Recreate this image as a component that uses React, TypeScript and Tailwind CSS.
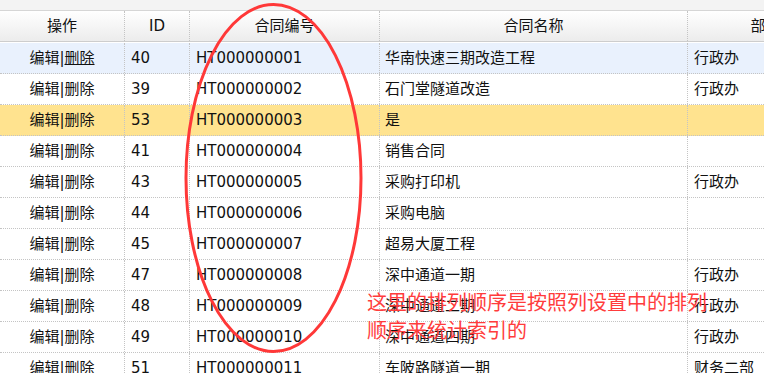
import React from "react";

type Row = {
  id: number;
  code: string;
  name: string;
  dept: string;
  tone?: "hover" | "selected";
};

const rows: Row[] = [
  { id: 40, code: "HT000000001", name: "华南快速三期改造工程", dept: "行政办", tone: "hover" },
  { id: 39, code: "HT000000002", name: "石门堂隧道改造", dept: "行政办" },
  { id: 53, code: "HT000000003", name: "是", dept: "", tone: "selected" },
  { id: 41, code: "HT000000004", name: "销售合同", dept: "" },
  { id: 43, code: "HT000000005", name: "采购打印机", dept: "行政办" },
  { id: 44, code: "HT000000006", name: "采购电脑", dept: "" },
  { id: 45, code: "HT000000007", name: "超易大厦工程", dept: "" },
  { id: 47, code: "HT000000008", name: "深中通道一期", dept: "行政办" },
  { id: 48, code: "HT000000009", name: "深中通道二期", dept: "行政办" },
  { id: 49, code: "HT000000010", name: "深中通道四期", dept: "行政办" },
  { id: 51, code: "HT000000011", name: "车陂路隧道一期", dept: "财务二部" },
];

const cell = "h-full flex items-center border-r border-dotted border-[#c4c4c4] shrink-0 overflow-hidden whitespace-nowrap";

export default function App() {
  return (
    <div
      className="relative w-[764px] h-[373px] overflow-hidden bg-white text-[15px] text-[#111]"
      style={{ fontFamily: '"DejaVu Sans", "Noto Sans CJK SC", sans-serif' }}
    >
      {/* 顶部空白条 */}
      <div className="h-[11px] bg-[#f3f3f3] border-b border-[#d6d6d6]" />

      {/* 表头 */}
      <div className="flex h-[31px] bg-gradient-to-b from-white to-[#ececec] border-b border-[#cdcdcd]">
        <div className={`${cell} w-[125px] justify-center`}>操作</div>
        <div className={`${cell} w-[65px] justify-center`}>ID</div>
        <div className={`${cell} w-[190px] justify-center`}>合同编号</div>
        <div className={`${cell} w-[308px] justify-center`}>合同名称</div>
        <div className={`${cell} w-[156px] justify-center`}>部门</div>
      </div>
      <div className="h-px bg-white" />

      {/* 数据行 */}
      {rows.map((r) => (
        <div
          key={r.id}
          className={`flex h-[31px] border-b border-dotted border-[#c4c4c4] ${
            r.tone === "hover" ? "bg-[#e9f1fd]" : r.tone === "selected" ? "bg-[#ffe38f]" : "bg-white"
          }`}
        >
          <div className={`${cell} w-[125px] justify-center`}>
            编辑|<span className={r.tone === "hover" ? "underline" : ""}>删除</span>
          </div>
          <div className={`${cell} w-[65px] pl-[6px]`}>{r.id}</div>
          <div className={`${cell} w-[190px] pl-[6px]`}>{r.code}</div>
          <div className={`${cell} w-[308px] pl-[5px]`}>{r.name}</div>
          <div className={`${cell} w-[156px] pl-[6px]`}>{r.dept}</div>
        </div>
      ))}

      {/* 标注 */}
      <svg className="absolute left-0 top-0 pointer-events-none" width="764" height="373">
        <ellipse cx="273.5" cy="178" rx="87.5" ry="173.5" fill="none" stroke="#ff3838" strokeWidth="3" />
      </svg>
      <div
        className="absolute left-[367px] top-[288px] text-[20px] leading-[28px] text-[#ff3c3c] whitespace-nowrap"
        style={{ fontFamily: '"Noto Sans CJK SC", sans-serif' }}
      >
        这里的排列顺序是按照列设置中的排列
        <br />
        顺序来统计索引的
      </div>
    </div>
  );
}
